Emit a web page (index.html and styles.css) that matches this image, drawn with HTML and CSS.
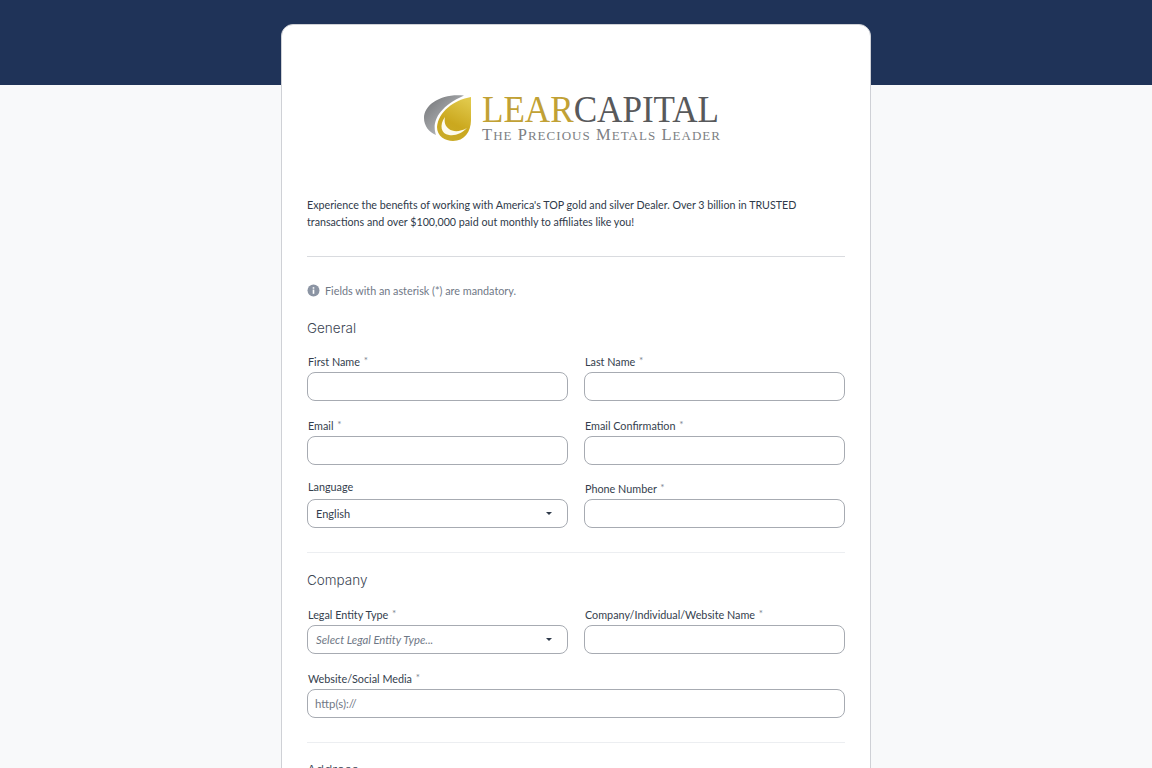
FILE: index.html
```html
<!DOCTYPE html>
<html lang="en">
<head>
<meta charset="utf-8">
<title>Lear Capital Affiliate Signup</title>
<link rel="stylesheet" href="styles.css">
</head>
<body>
<div class="band"></div>
<main class="card">
  <div class="logo">
    <svg width="304" height="50" viewBox="0 0 304 50" xmlns="http://www.w3.org/2000/svg">
      <defs>
        <linearGradient id="silver" x1="0" y1="0" x2="1" y2="1"><stop offset="0" stop-color="#6f7174"/><stop offset="0.55" stop-color="#a4a6a9"/><stop offset="1" stop-color="#d4d5d6"/></linearGradient>
        <linearGradient id="gold" x1="0.7" y1="0" x2="0.3" y2="1"><stop offset="0" stop-color="#e0c84a"/><stop offset="0.6" stop-color="#cba81e"/><stop offset="1" stop-color="#c9ab28"/></linearGradient>
      </defs>
      <path d="M40 1.500C18 -1 0 10 0 24C0 32 5 38 12 41C8 30 12 14 40 1.500Z" fill="url(#silver)"/>
      <path d="M47 3C30 6 14 18 13 33C13 42 21 47 29 47C40 47 47 38 47 26C47 17 47 9 47 3Z" fill="url(#gold)"/>
      <path d="M21 23C15 31 17 40 25 41C32 42 38 39 43 34C36 38 29 38 25 35C21 32 20 28 21 23Z" fill="#fdfbee"/>
      <text x="58" y="28" class="logo-main" textLength="237" lengthAdjust="spacingAndGlyphs"><tspan fill="#c1a135">LEAR</tspan><tspan fill="#58595b">CAPITAL</tspan></text>
      <text x="58" y="46" class="logo-sub" textLength="238" lengthAdjust="spacing">T<tspan class="sc">HE</tspan> P<tspan class="sc">RECIOUS</tspan> M<tspan class="sc">ETALS</tspan> L<tspan class="sc">EADER</tspan></text>
    </svg>
  </div>

  <p class="intro">Experience the benefits of working with America's TOP gold and silver Dealer. Over 3 billion in TRUSTED transactions and over $100,000 paid out monthly to affiliates like you!</p>
  <hr class="rule rule-strong">

  <p class="note">
    <svg class="note-icon" width="13" height="13" viewBox="0 0 13 13" xmlns="http://www.w3.org/2000/svg"><circle cx="6.500" cy="6.500" r="6" fill="#8b94a3"/><rect x="5.700" y="5.600" width="1.600" height="4.200" fill="#fff"/><rect x="5.700" y="3.200" width="1.600" height="1.500" fill="#fff"/></svg>
    Fields with an asterisk (*) are mandatory.
  </p>

  <h2 class="section-title title-general">General</h2>
  <div class="grid">
    <div class="field"><label class="label">First Name <span class="req">*</span></label><div class="input"></div></div>
    <div class="field"><label class="label">Last Name <span class="req">*</span></label><div class="input"></div></div>
    <div class="field"><label class="label">Email <span class="req">*</span></label><div class="input"></div></div>
    <div class="field"><label class="label">Email Confirmation <span class="req">*</span></label><div class="input"></div></div>
    <div class="field"><label class="label">Language</label><div class="input select"><span>English</span><i class="caret"></i></div></div>
    <div class="field"><label class="label">Phone Number <span class="req">*</span></label><div class="input"></div></div>
  </div>
  <hr class="rule">

  <h2 class="section-title">Company</h2>
  <div class="grid grid-company">
    <div class="field"><label class="label">Legal Entity Type <span class="req">*</span></label><div class="input select"><em class="placeholder">Select Legal Entity Type...</em><i class="caret"></i></div></div>
    <div class="field"><label class="label">Company/Individual/Website Name <span class="req">*</span></label><div class="input"></div></div>
    <div class="field wide"><label class="label">Website/Social Media <span class="req">*</span></label><div class="input url">http(s)://</div></div>
  </div>
  <hr class="rule">

  <h2 class="section-title">Address</h2>
</main>
</body>
</html>
```
FILE: styles.css
```css
* { box-sizing: border-box; }
html, body { margin: 0; height: 768px; overflow: hidden; }
body {
  background: #f8f9fa;
  font-family: Lato, "Liberation Sans", sans-serif;
  color: #2f3a4a;
}
.band { height: 85px; background: #1f3358; }
.card {
  width: 590px;
  height: 900px;
  margin: -61px auto 0;
  padding: 0 25px;
  background: #fff;
  border: 1px solid #cfd1d6;
  border-radius: 12px;
}
.logo { display: flex; justify-content: center; padding: 69px 0 0; height: 171px; }
.logo-main { font-family: "Liberation Serif", serif; font-size: 38px; }
.logo-sub { font-family: "Liberation Serif", serif; font-size: 16.500px; fill: #7d7f83; }
.logo-sub .sc { font-size: 13px; }
.intro { margin: 0; font-size: 10.700px; line-height: 17px; color: #2f3a4a; }
.rule { border: 0; border-top: 1px solid #eceef1; margin: 0; }
.rule-strong { margin-top: 26px; border-top-color: #d9dbdf; }
.note { display: flex; align-items: center; gap: 5px; margin: 25px 0 0; height: 17px; font-size: 10.800px; color: #6f7886; }
.note-icon { flex: none; }
.section-title { margin: 17px 0 0; height: 21px; font-family: Inter, sans-serif; font-size: 13.500px; line-height: 21px; font-weight: 300; color: #3c4553; }
.title-general { margin-top: 19px; }
.grid { display: grid; grid-template-columns: 261px 261px; column-gap: 16px; row-gap: 14.500px; margin-top: 13px; }
.grid-company { margin-top: 14px; }
.wide { grid-column: 1 / 3; }
.label { display: block; height: 20px; padding-left: 1px; font-size: 10.800px; line-height: 16px; color: #343e4d; }
.req { color: #7c8490; font-size: 10px; vertical-align: 2px; margin-left: 1px; }
.input {
  height: 29px;
  border: 1px solid #a7abb2;
  border-radius: 8px;
  background: #fff;
  font-size: 11px;
  line-height: 27px;
  padding: 0 8px;
}
.select { display: flex; align-items: center; justify-content: space-between; padding-right: 15px; color: #343e4d; }
.caret { width: 0; height: 0; border-left: 3.500px solid transparent; border-right: 3.500px solid transparent; border-top: 3.500px solid #2f3a4a; }
.placeholder { color: #6f7886; font-size: 11.300px; }
.url { padding-left: 7px; color: #6f7886; font-size: 11.400px; }
.grid + .rule { margin-top: 24px; }
```
